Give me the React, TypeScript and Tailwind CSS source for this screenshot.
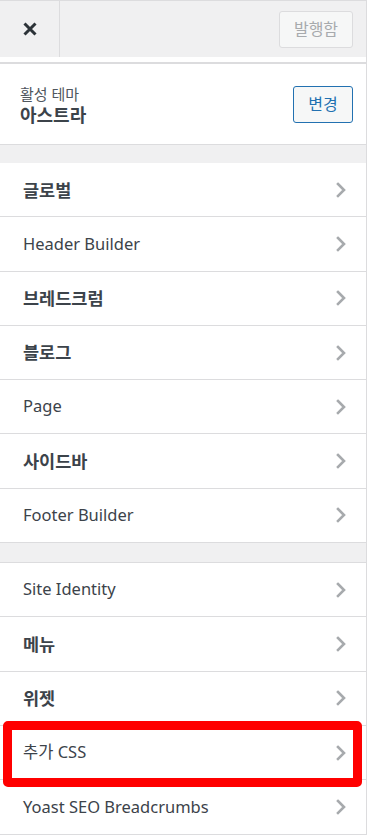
type Section = { title: string; kr?: boolean };

const groupOne: Section[] = [
  { title: "글로벌", kr: true },
  { title: "Header Builder" },
  { title: "브레드크럼", kr: true },
  { title: "블로그", kr: true },
  { title: "Page" },
  { title: "사이드바", kr: true },
  { title: "Footer Builder" },
];

const groupTwo: Section[] = [
  { title: "Site Identity" },
  { title: "메뉴", kr: true },
  { title: "위젯", kr: true },
  { title: "추가 CSS" },
  { title: "Yoast SEO Breadcrumbs" },
];

function Chevron() {
  return (
    <svg width="10" height="16" viewBox="0 0 10 16" fill="none" className="shrink-0">
      <polyline points="2,2 8,8 2,14" stroke="#a7aaad" strokeWidth="2.6" strokeLinecap="square" />
    </svg>
  );
}

function SectionRow({ section, highlight }: { section: Section; highlight?: boolean }) {
  return (
    <li className="relative flex h-[54.3px] items-center justify-between border-b border-[#dcdcde] bg-white pl-[23px] pr-[20px]">
      <h3 className={`text-[#3c434a] ${section.kr ? "text-[17.5px] font-semibold" : "text-[16.5px] font-normal"}`}>{section.title}</h3>
      <Chevron />
      {highlight && (
        <span className="pointer-events-none absolute left-[3px] right-[4px] top-[-5px] bottom-[-8px] z-10 rounded-[5px] border-[9px] border-[#ff0000]" />
      )}
    </li>
  );
}

export default function App() {
  return (
    <div className="min-h-[838px] w-[368px] bg-white font-['Noto_Sans','Noto_Sans_CJK_KR',sans-serif]">
      <div className="w-[367px] border-r border-[#dcdcde]">
        <header className="flex h-[57px] items-center justify-between border-t border-[#dcdcde] bg-[#f0f0f1] pr-[13px]">
          <button type="button" className="flex h-full w-[60px] items-center justify-center border-r border-[#dcdcde]">
            <svg width="14" height="14" viewBox="0 0 14 14" fill="none">
              <path d="M1.5 1.5L12.5 12.5M12.5 1.5L1.5 12.5" stroke="#2c3338" strokeWidth="3" />
            </svg>
          </button>
          <button type="button" disabled className="h-[37px] w-[74px] rounded-[3px] border border-[#dcdcde] bg-[#f6f7f7] text-[16px] text-[#a7aaad]">
            발행함
          </button>
        </header>
        <div className="h-[5px] bg-white" />
        <section className="flex h-[83px] items-center justify-between border-t-2 border-b border-[#dcdcde] pl-[20px] pr-[13px]">
          <div className="flex flex-col pt-[2px]">
            <span className="text-[15px] leading-[20px] text-[#50575e]">활성 테마</span>
            <span className="text-[18px] font-bold leading-[22px] text-[#3c434a]">아스트라</span>
          </div>
          <button type="button" className="h-[37px] w-[60px] rounded-[3px] border border-[#2271b1] bg-[#f6f7f7] text-[16px] text-[#2271b1]">
            변경
          </button>
        </section>
        <div className="h-[18px] bg-[#f0f0f1]" />
        <ul>
          {groupOne.map((s) => (
            <SectionRow key={s.title} section={s} />
          ))}
        </ul>
        <div className="h-[20px] border-b border-[#dcdcde] bg-[#f0f0f1]" />
        <ul>
          {groupTwo.map((s) => (
            <SectionRow key={s.title} section={s} highlight={s.title === "추가 CSS"} />
          ))}
        </ul>
      </div>
    </div>
  );
}
